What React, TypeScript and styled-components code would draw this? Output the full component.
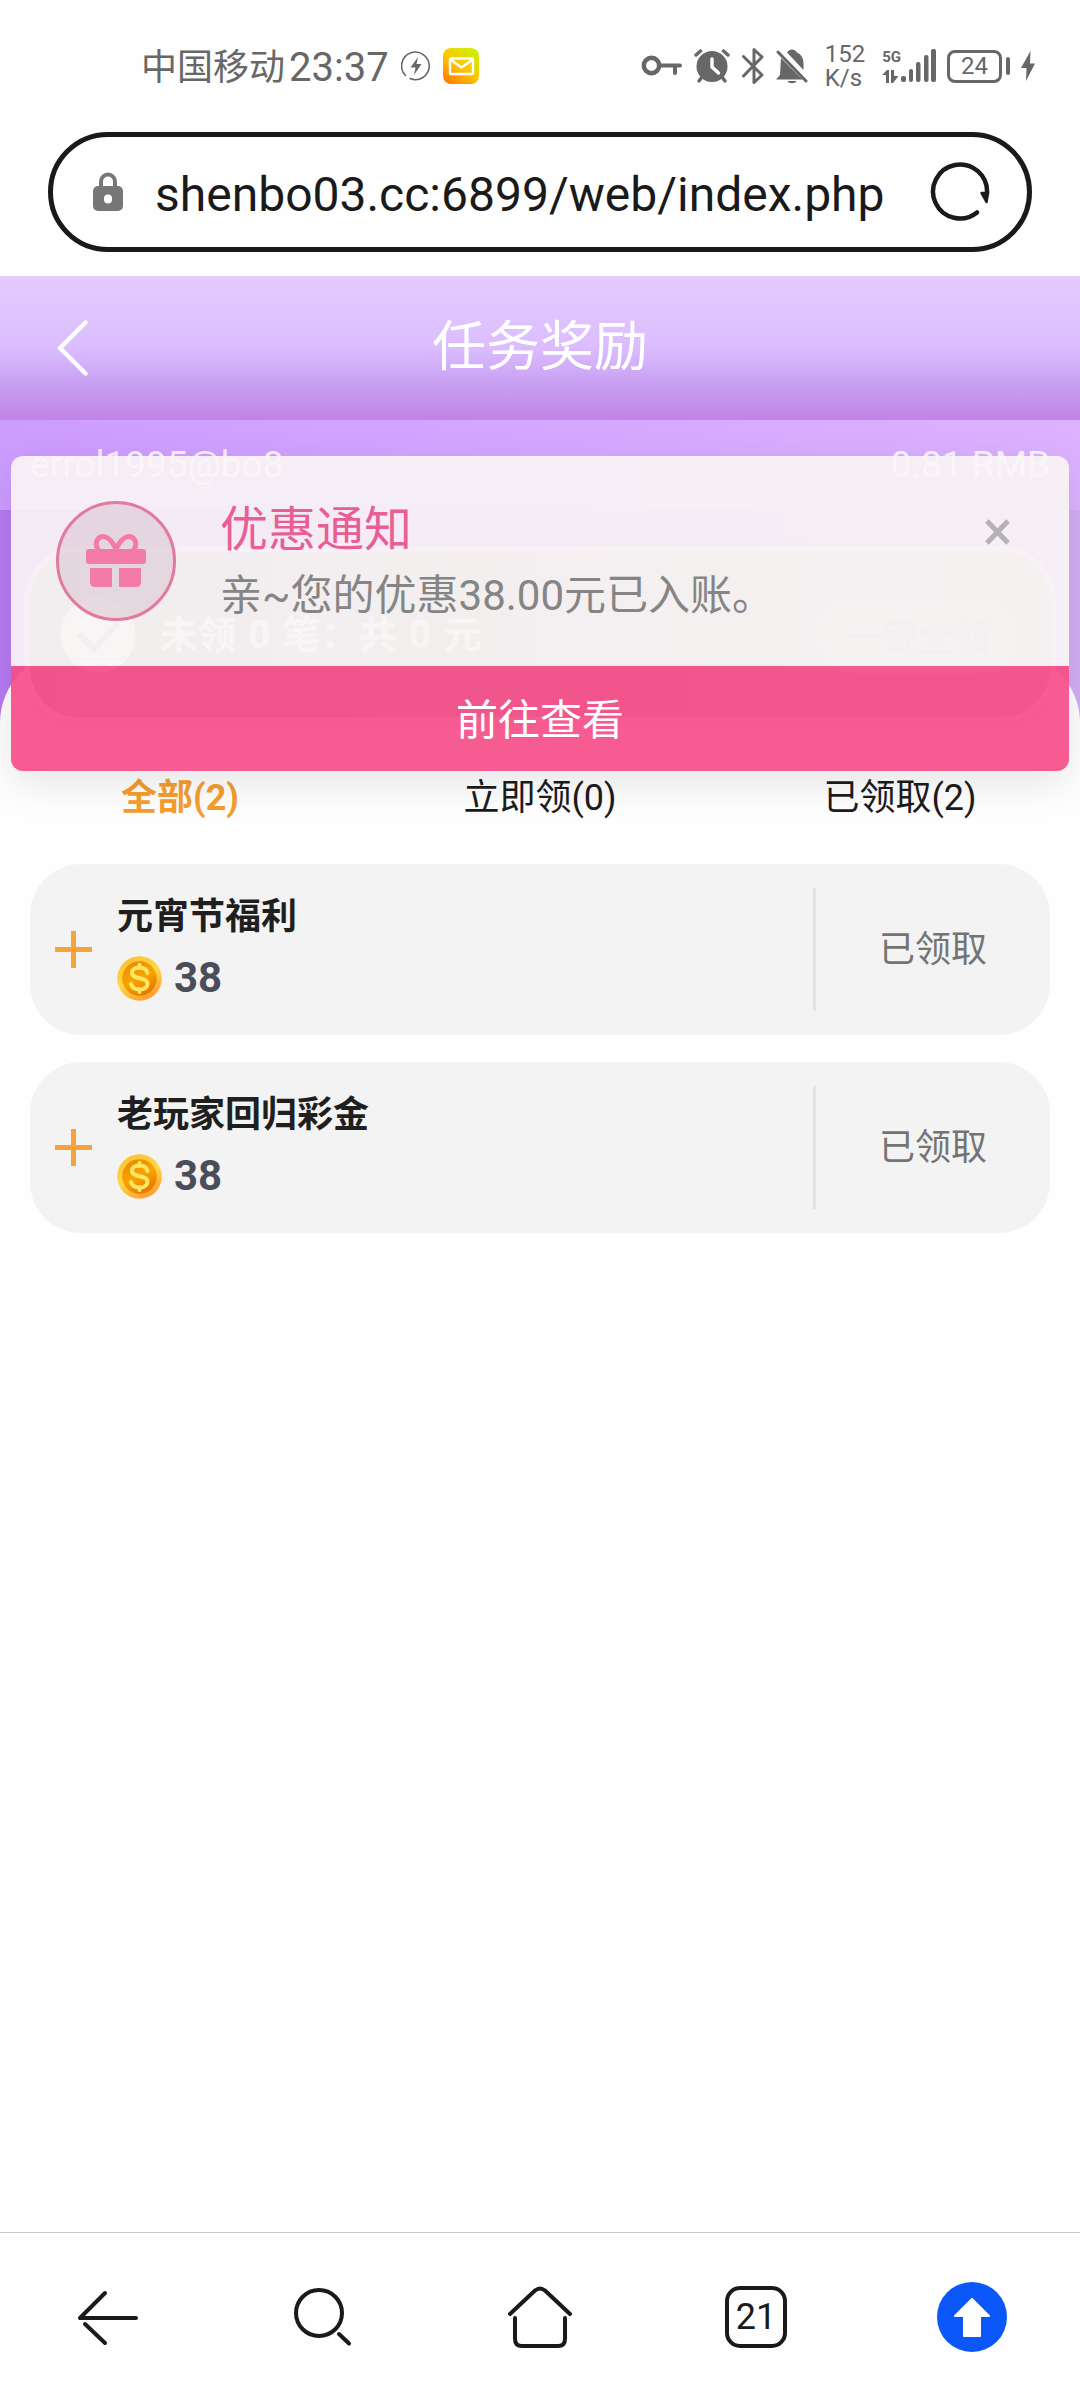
import React, { useState } from "react";
import styled, { createGlobalStyle } from "styled-components";

const GlobalStyle = createGlobalStyle`
  * { box-sizing: border-box; }
  body {
    margin: 0;
    background: #fefefe;
    color: #1c1c1c;
    font-family: Roboto, "Noto Sans CJK SC", sans-serif;
  }
  button, input {
    margin: 0;
    padding: 0;
    border: 0;
    background: none;
    color: inherit;
    font: inherit;
  }
  svg { display: block; flex: none; }
  h1, h2, p { margin: 0; font-weight: 400; }
`;

const Screen = styled.div`
  display: flex;
  flex-direction: column;
  min-height: 100vh;
`;

/* ---------- Status bar ---------- */

const StatusBar = styled.header`
  display: flex;
  align-items: center;
  justify-content: space-between;
  height: 132px;
  padding: 0 45px 0 141px;
  color: #676767;
`;

const StatusGroup = styled.div<{ $gap: number }>`
  display: flex;
  align-items: center;
  gap: ${(p) => p.$gap}px;
`;

const Carrier = styled.span`
  padding-top: 3px;
  font-size: 36px;
  line-height: 48px;
`;

const Clock = styled.time`
  margin-left: -8px;
  padding-top: 3px;
  font-size: 40px;
  line-height: 48px;
`;

const Speed = styled.div`
  display: flex;
  flex-direction: column;
  margin: 0 6px;
  font-size: 24px;
  line-height: 24px;
`;

const Signal = styled.div`
  display: flex;
  align-items: flex-end;
`;

const Network = styled.div`
  display: flex;
  flex-direction: column;
  justify-content: space-between;
  height: 34px;
  font-size: 15px;
  font-weight: 700;
  line-height: 16px;
`;

const Battery = styled.div`
  display: flex;
  align-items: center;
  gap: 4px;
  &::after {
    content: "";
    width: 4px;
    height: 18px;
    border-radius: 2px;
    background: currentColor;
  }
`;

const BatteryLevel = styled.span`
  display: flex;
  align-items: center;
  justify-content: center;
  width: 55px;
  height: 33px;
  border: 3px solid currentColor;
  border-radius: 8px;
  font-size: 24px;
  line-height: 24px;
`;

/* ---------- Address bar ---------- */

const AddressBar = styled.form`
  display: flex;
  align-items: center;
  height: 120px;
  margin: 0 48px 24px;
  padding: 0 37px 0 40px;
  border: 5px solid #1a1a1a;
  border-radius: 60px;
  color: #1a1a1a;
`;

const AddressInput = styled.input`
  flex: 1;
  min-width: 0;
  height: 72px;
  margin: 0 42px 0 32px;
  padding-top: 5px;
  font-size: 48px;
  outline: none;
`;

/* ---------- Page ---------- */

const Page = styled.main`
  position: relative;
  flex: 1;
`;

const TitleBar = styled.div`
  display: grid;
  grid-template-columns: 108px 1fr 108px;
  align-items: center;
  height: 144px;
  background: linear-gradient(#e4cbfb, #dbbdff 50%, #c9a0f2 74%, #c084e6);
  color: #fff;
`;

const TitleButton = styled.button`
  display: flex;
  justify-content: flex-end;
  padding-right: 20px;
`;

const Title = styled.h1`
  font-size: 54px;
  line-height: 72px;
  text-align: center;
`;

const Account = styled.div`
  display: flex;
  align-items: center;
  justify-content: space-between;
  height: 90px;
  padding: 0 30px;
  background: linear-gradient(90deg, #cd9cff, #dcb2ff);
  color: rgba(255, 255, 255, 0.85);
  font-size: 37px;
  line-height: 48px;
`;

const Hero = styled.div`
  padding: 36px 24px 0;
  background: linear-gradient(90deg, #b67af2, #d3aef3);
`;

const Summary = styled.section`
  position: relative;
  z-index: 1;
  display: flex;
  align-items: center;
  gap: 24px;
  height: 177px;
  padding: 0 30px;
  border: 6px solid rgba(255, 255, 255, 0.4);
  border-radius: 54px;
  background: linear-gradient(90deg, #a09ea6, #ccc4c8);
  background-clip: padding-box;
  box-shadow: 0 6px 12px rgba(0, 0, 0, 0.1);
`;

const SummaryText = styled.p`
  flex: 1;
  color: rgba(255, 255, 255, 0.9);
  font-size: 38px;
  font-weight: 700;
  line-height: 48px;
`;

const SummaryNumber = styled.span`
  margin: 0 3px;
`;

const ClaimAll = styled.button`
  width: 204px;
  height: 78px;
  border-radius: 39px;
  background: #d9d1d4;
  color: #bab2b6;
  font-size: 36px;
  font-weight: 700;
`;

const Sheet = styled.section`
  margin-top: -72px;
  padding: 108px 30px 48px;
  border-radius: 72px 72px 0 0;
  background: #fefefe;
`;

const Tabs = styled.div`
  display: grid;
  grid-template-columns: repeat(3, 1fr);
  height: 78px;
  margin: 0 -30px 27px;
`;

const Tab = styled.button<{ $active: boolean }>`
  color: ${(p) => (p.$active ? "#f59d2e" : "#1c1c1c")};
  font-size: 36px;
  font-weight: ${(p) => (p.$active ? 700 : 400)};
  line-height: 48px;
`;

const RewardList = styled.ul`
  display: flex;
  flex-direction: column;
  gap: 27px;
  margin: 0;
  padding: 0;
  list-style: none;
`;

const Reward = styled.li`
  display: flex;
  align-items: center;
  height: 171px;
  padding-left: 24px;
  border-radius: 51px;
  background: #f3f3f3;
`;

const RewardBody = styled.div`
  display: flex;
  flex: 1;
  flex-direction: column;
  gap: 13px;
  padding: 0 0 4px 24px;
`;

const RewardTitle = styled.h2`
  color: #1f1f1f;
  font-size: 36px;
  font-weight: 700;
  line-height: 48px;
`;

const Amount = styled.div`
  display: flex;
  align-items: center;
  gap: 12px;
  color: #4b4e59;
  font-size: 42px;
  font-weight: 700;
  line-height: 48px;
`;

const RewardState = styled.div`
  display: flex;
  align-items: center;
  justify-content: center;
  width: 237px;
  height: 123px;
  border-left: 3px solid #e4e4e4;
  color: #747474;
  font-size: 36px;
  line-height: 48px;
`;

/* ---------- Toast ---------- */

const Toast = styled.aside`
  position: absolute;
  z-index: 2;
  top: 180px;
  right: 11px;
  left: 11px;
  overflow: hidden;
  border-radius: 12px;
  box-shadow: 0 12px 42px rgba(0, 0, 0, 0.1);
`;

const ToastBody = styled.div`
  display: flex;
  align-items: flex-start;
  height: 210px;
  padding: 45px 59px 0 45px;
  background: rgba(250, 245, 245, 0.91);
`;

const ToastIcon = styled.div`
  display: flex;
  align-items: center;
  justify-content: center;
  width: 120px;
  height: 120px;
  border: 3px solid #e2799f;
  border-radius: 50%;
  background: rgba(214, 192, 204, 0.5);
  color: #f57ba7;
`;

const ToastText = styled.div`
  flex: 1;
  padding: 2px 0 0 44px;
`;

const ToastTitle = styled.h2`
  color: #e95e94;
  font-size: 48px;
  line-height: 54px;
`;

const ToastMessage = styled.p`
  padding-top: 15px;
  color: #858585;
  font-size: 42px;
  line-height: 48px;
`;

const CloseButton = styled.button`
  padding-top: 18px;
  color: #b4b1b4;
`;

const ToastAction = styled.button`
  display: block;
  width: 100%;
  height: 105px;
  padding-bottom: 5px;
  background: rgba(245, 77, 136, 0.92);
  color: #fff;
  font-size: 42px;
`;

/* ---------- Bottom navigation ---------- */

const BottomNav = styled.nav`
  display: grid;
  grid-template-columns: repeat(5, 1fr);
  height: 168px;
  border-top: 1px solid #c8c8c8;
  color: #1a1a1a;
`;

const NavButton = styled.button`
  display: flex;
  align-items: center;
  justify-content: center;
`;

const TabCount = styled.span`
  display: flex;
  align-items: center;
  justify-content: center;
  width: 62px;
  height: 62px;
  border: 4px solid currentColor;
  border-radius: 15px;
  font-size: 36px;
  line-height: 36px;
`;

/* ---------- Icons ---------- */

const ChargingIcon = () => (
  <svg width="30" height="30" viewBox="0 0 30 30" fill="none" stroke="currentColor">
    <path d="M4.500 24.500A13.800 13.800 0 1 1 9 27.600" strokeWidth="1.600" strokeLinecap="round" />
    <path d="M17 6 9.500 16.500h5L13 24l7.500-11h-5z" fill="currentColor" stroke="none" />
  </svg>
);

const MailIcon = () => (
  <svg width="36" height="36" viewBox="0 0 36 36" fill="none">
    <defs>
      <linearGradient id="mail" x1="0.1" y1="1" x2="0.8" y2="0">
        <stop offset="0" stopColor="#ff7a00" />
        <stop offset="0.5" stopColor="#ffc400" />
        <stop offset="1" stopColor="#cdf000" />
      </linearGradient>
    </defs>
    <rect width="36" height="36" rx="8" fill="url(#mail)" />
    <rect x="7" y="10.500" width="23" height="15.500" rx="1" stroke="#fff" strokeWidth="2.400" />
    <path d="m8 12 10.500 7.500L29 12" stroke="#fff" strokeWidth="2.400" />
  </svg>
);

const KeyIcon = () => (
  <svg width="42" height="36" viewBox="0 0 42 36" fill="none" stroke="currentColor" strokeWidth="4.500" strokeLinecap="round">
    <circle cx="10.500" cy="17.500" r="7.700" />
    <path d="M18 17.500h21M34 18v7" strokeWidth="4" />
  </svg>
);

const AlarmIcon = () => (
  <svg width="36" height="36" viewBox="0 0 36 36" fill="none" stroke="currentColor" strokeWidth="3.400" strokeLinecap="round">
    <circle cx="18" cy="18.500" r="15.500" fill="currentColor" stroke="none" />
    <path d="m2 7 4.500-4M34 7l-4.500-4M5 33l3-4M31 33l-3-4" />
    <path d="M18 11v8l6.500 6" stroke="#fefefe" />
  </svg>
);

const BluetoothIcon = () => (
  <svg width="24" height="36" viewBox="0 0 24 36" fill="none" stroke="currentColor" strokeWidth="3" strokeLinecap="round" strokeLinejoin="round">
    <path d="M2.500 8.500 21 27l-8 7.500v-33l8 7.500L2.500 28" />
  </svg>
);

const MutedBellIcon = () => (
  <svg width="32" height="36" viewBox="0 0 32 36" fill="none">
    <path d="M11 4.500C13.500.5 18.500.5 21 4.500c4.500 2 6.500 6 6.500 11V22z" fill="currentColor" />
    <path d="M5 10 24 29l3 2.500H0L4 27z" fill="currentColor" />
    <path d="M11.500 33h9c-1.500 3-7.500 3-9 0z" fill="currentColor" />
    <path d="m2 4 28 29" stroke="currentColor" strokeWidth="3" strokeLinecap="round" />
  </svg>
);

const DataArrowsIcon = () => (
  <svg width="17" height="13" viewBox="0 0 17 13" fill="currentColor">
    <path d="M0 5 5 0h2v13H4V5zM9 0h3v6h4.500L11 13H9z" />
  </svg>
);

const SignalBarsIcon = () => (
  <svg width="35" height="34" viewBox="0 0 35 34" fill="currentColor">
    <rect x="0" y="27" width="5" height="6" rx="2" />
    <rect x="8" y="20" width="4" height="13" rx="2" />
    <rect x="15" y="13" width="4.500" height="20" rx="2" />
    <rect x="23" y="6" width="4.500" height="27" rx="2" />
    <rect x="30" y="0" width="5" height="33" rx="2" />
  </svg>
);

const BoltIcon = () => (
  <svg width="14" height="30" viewBox="0 0 14 30" fill="currentColor">
    <path d="M9.500 0 0 17h5.500L5 30l9-17.500H9z" />
  </svg>
);

const LockIcon = () => (
  <svg width="30" height="40" viewBox="0 0 30 40" fill="none">
    <path d="M8 17V9.500a7 7 0 0 1 14 0V17" stroke="#777" strokeWidth="4" />
    <rect y="14" width="30" height="25" rx="5" fill="#777" />
    <rect x="11" y="22.500" width="8" height="9" rx="4" fill="#fefefe" />
  </svg>
);

const ReloadIcon = () => (
  <svg width="60" height="60" viewBox="0 0 60 60" fill="none" stroke="currentColor" strokeLinecap="round">
    <path d="M47 50.500A27 27 0 1 1 57 31" strokeWidth="4.500" />
    <path d="M51.500 31h6.500l-1.500 9z" fill="currentColor" strokeWidth="2.500" strokeLinejoin="round" />
  </svg>
);

const BackChevronIcon = () => (
  <svg width="31" height="56" viewBox="0 0 31 56" fill="none" stroke="currentColor" strokeWidth="4.500" strokeLinecap="round" strokeLinejoin="round">
    <path d="M28.500 2.500 3 28l25.500 25.500" />
  </svg>
);

const CheckBadge = () => (
  <svg width="76" height="76" viewBox="0 0 76 76" fill="none">
    <circle cx="38" cy="38" r="37.500" fill="#f2eff2" />
    <path d="m19 37 15 15 24-26" stroke="#b4b0b6" strokeWidth="6" />
  </svg>
);

const PlusIcon = () => (
  <svg width="39" height="39" viewBox="0 0 39 39" stroke="#f7a23a" strokeWidth="5">
    <path d="M1 19.500h37M19.500 1v37" />
  </svg>
);

const CoinIcon = () => (
  <svg width="45" height="45" viewBox="0 0 45 45" fill="none">
    <defs>
      <linearGradient id="rim" x1="0.2" y1="0" x2="0.7" y2="1">
        <stop offset="0" stopColor="#fbc02a" />
        <stop offset="0.5" stopColor="#ffd84a" />
        <stop offset="1" stopColor="#ff9a2b" />
      </linearGradient>
      <linearGradient id="face" x1="0.2" y1="0" x2="0.7" y2="1">
        <stop offset="0" stopColor="#e88a06" />
        <stop offset="0.5" stopColor="#f9a400" />
        <stop offset="1" stopColor="#e67400" />
      </linearGradient>
    </defs>
    <circle cx="22.500" cy="22.500" r="22.300" fill="url(#rim)" />
    <circle cx="22.500" cy="22.500" r="17.300" fill="url(#face)" />
    <path d="M30.500 17c-1-4-4-5.500-8-5.500-4.500 0-7.500 2-7.500 5.300 0 7.400 15.500 3.400 15.500 11 0 3.200-3 5.700-8 5.700-4.500 0-7.500-2-8.500-5.500M22.500 9v3M22.500 33v3" stroke="#ffe763" strokeWidth="4" strokeLinecap="round" />
  </svg>
);

const GiftIcon = () => (
  <svg width="60" height="54" viewBox="0 0 60 54" fill="none">
    <path d="M30 15C25 5 21 2 16.500 2.500 10 3.500 8.500 11 12.500 16M30 15C35 5 39 2 43.500 2.500 50 3.500 51.500 11 47.500 16" stroke="currentColor" strokeWidth="5" />
    <rect y="15" width="60" height="15" rx="3" fill="currentColor" />
    <path d="M4 34h22v19H9q-5 0-5-5zM33 34h22v14q0 5-5 5H33z" fill="currentColor" />
  </svg>
);

const CloseIcon = () => (
  <svg width="25" height="26" viewBox="0 0 25 26" stroke="currentColor" strokeWidth="5">
    <path d="m2 2 21 22M23 2 2 24" />
  </svg>
);

const NavIcon = ({ children }: { children: React.ReactNode }) => (
  <svg width="72" height="72" viewBox="0 0 72 72" fill="none" stroke="currentColor" strokeWidth="4" strokeLinecap="round" strokeLinejoin="round">
    {children}
  </svg>
);

const tabs = ["全部(2)", "立即领(0)", "已领取(2)"];

const rewards = [
  { title: "元宵节福利", amount: 38 },
  { title: "老玩家回归彩金", amount: 38 },
];

export default function App() {
  const [active, setActive] = useState(0);
  const [toastOpen, setToastOpen] = useState(true);

  return (
    <Screen>
      <GlobalStyle />
      <StatusBar>
        <StatusGroup $gap={12}>
          <Carrier>中国移动</Carrier>
          <Clock>23:37</Clock>
          <ChargingIcon />
          <MailIcon />
        </StatusGroup>
        <StatusGroup $gap={11}>
          <KeyIcon />
          <AlarmIcon />
          <BluetoothIcon />
          <MutedBellIcon />
          <Speed>
            <span>152</span>
            <span>K/s</span>
          </Speed>
          <Signal>
            <Network>
              <span>5G</span>
              <DataArrowsIcon />
            </Network>
            <SignalBarsIcon />
          </Signal>
          <Battery>
            <BatteryLevel>24</BatteryLevel>
          </Battery>
          <BoltIcon />
        </StatusGroup>
      </StatusBar>

      <AddressBar onSubmit={(e) => e.preventDefault()}>
        <LockIcon />
        <AddressInput aria-label="网址" defaultValue="shenbo03.cc:6899/web/index.php" />
        <button type="button" aria-label="刷新">
          <ReloadIcon />
        </button>
      </AddressBar>

      <Page>
        <TitleBar>
          <TitleButton type="button" aria-label="返回">
            <BackChevronIcon />
          </TitleButton>
          <Title>任务奖励</Title>
        </TitleBar>
        <Account>
          <span>errol1995@bo8</span>
          <span>0.81 RMB</span>
        </Account>
        <Hero>
          <Summary>
            <CheckBadge />
            <SummaryText>
              未领 <SummaryNumber>0</SummaryNumber> 笔：共 <SummaryNumber>0</SummaryNumber> 元
            </SummaryText>
            <ClaimAll type="button">一键全领</ClaimAll>
          </Summary>
        </Hero>
        <Sheet>
          <Tabs role="tablist">
            {tabs.map((label, i) => (
              <Tab
                key={label}
                type="button"
                role="tab"
                aria-selected={i === active}
                $active={i === active}
                onClick={() => setActive(i)}
              >
                {label}
              </Tab>
            ))}
          </Tabs>
          <RewardList>
            {rewards.map((r) => (
              <Reward key={r.title}>
                <button type="button" aria-label="展开">
                  <PlusIcon />
                </button>
                <RewardBody>
                  <RewardTitle>{r.title}</RewardTitle>
                  <Amount>
                    <CoinIcon />
                    {r.amount}
                  </Amount>
                </RewardBody>
                <RewardState>已领取</RewardState>
              </Reward>
            ))}
          </RewardList>
        </Sheet>

        {toastOpen && (
          <Toast>
            <ToastBody>
              <ToastIcon>
                <GiftIcon />
              </ToastIcon>
              <ToastText>
                <ToastTitle>优惠通知</ToastTitle>
                <ToastMessage>亲~您的优惠38.00元已入账。</ToastMessage>
              </ToastText>
              <CloseButton type="button" aria-label="关闭" onClick={() => setToastOpen(false)}>
                <CloseIcon />
              </CloseButton>
            </ToastBody>
            <ToastAction type="button">前往查看</ToastAction>
          </Toast>
        )}
      </Page>

      <BottomNav>
        <NavButton type="button" aria-label="后退">
          <NavIcon>
            <path d="M33 12 8 37h56" />
            <path d="m13 43 20 19" />
          </NavIcon>
        </NavButton>
        <NavButton type="button" aria-label="搜索">
          <NavIcon>
            <circle cx="31" cy="32" r="23" />
            <path d="m51 53 10 9.500" />
          </NavIcon>
        </NavButton>
        <NavButton type="button" aria-label="主页">
          <NavIcon>
            <path d="M6 33 31 9.500q5-4 10 0L66 33" />
            <path d="M11 37v21q0 7 7 7h36q7 0 7-7V37" />
          </NavIcon>
        </NavButton>
        <NavButton type="button">
          <TabCount>21</TabCount>
        </NavButton>
        <NavButton type="button" aria-label="回到顶部">
          <svg width="70" height="70" viewBox="0 0 70 70">
            <circle cx="35" cy="35" r="35" fill="#0b57f9" />
            <path d="M35 17 52 34H43v20H27V34H18z" fill="#fff" stroke="#fff" strokeWidth="2" strokeLinejoin="round" />
          </svg>
        </NavButton>
      </BottomNav>
    </Screen>
  );
}
